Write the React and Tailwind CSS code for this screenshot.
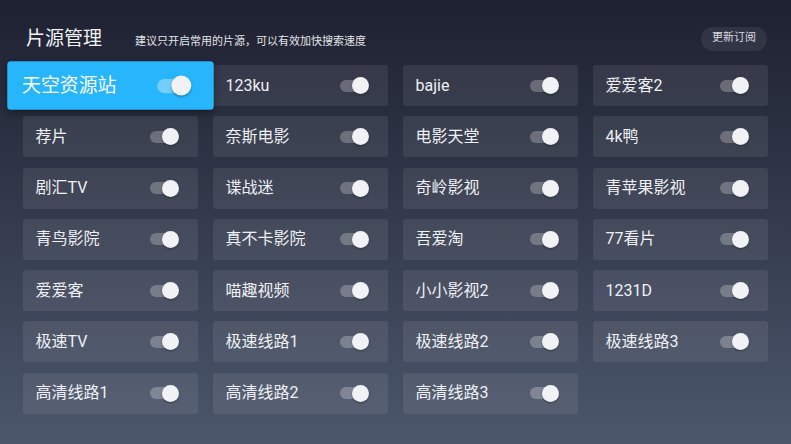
const SOURCES = [
  "天空资源站", "123ku", "bajie", "爱爱客2",
  "荐片", "奈斯电影", "电影天堂", "4k鸭",
  "剧汇TV", "谍战迷", "奇岭影视", "青苹果影视",
  "青鸟影院", "真不卡影院", "吾爱淘", "77看片",
  "爱爱客", "喵趣视频", "小小影视2", "1231D",
  "极速TV", "极速线路1", "极速线路2", "极速线路3",
  "高清线路1", "高清线路2", "高清线路3",
];

const Toggle = ({ active }) => (
  <div className="relative w-[29px] h-[17px] shrink-0">
    {/* track */}
    <div
      className={`absolute left-0 top-[2.5px] w-[24px] h-[12px] rounded-full ${
        active ? "bg-white/35" : "bg-white/25"
      }`}
    />
    {/* knob */}
    <div className="absolute right-0 top-0 w-[17px] h-[17px] rounded-full bg-[#f1f2f5] shadow-[0_1px_2px_rgba(0,0,0,0.35)]" />
  </div>
);

const SourceCard = ({ name, focused }) => (
  <div
    className={`flex items-center justify-between h-[41px] pl-[12.5px] pr-[19px] rounded-[3px] ${
      focused
        ? "relative z-10 scale-[1.18] bg-[#27b5fb] text-white shadow-[0_2px_6px_rgba(0,0,0,0.35)]"
        : "bg-white/[0.08] text-[#eef0f4]"
    }`}
  >
    <span className="text-[16px] leading-none">{name}</span>
    <Toggle active={focused} />
  </div>
);

export default function App() {
  return (
    <div
      className="w-full h-[444px] overflow-hidden bg-gradient-to-b from-[#1e2131] to-[#4c576c]"
      style={{ fontFamily: 'Roboto, "Noto Sans CJK SC", sans-serif' }}
    >
      {/* HEADER */}
      <div className="flex items-center justify-between pl-[26px] pr-[24px] pt-[26px] h-[51px]">
        <div className="flex items-end">
          <h1 className="text-[19px] leading-[24px] text-[#f2f3f6] font-normal">片源管理</h1>
          <span className="ml-[33px] mb-[1px] text-[11px] leading-[16px] text-[#e2e4e9]">
            建议只开启常用的片源，可以有效加快搜索速度
          </span>
        </div>
        <button className="w-[66px] h-[24px] rounded-full bg-white/[0.07] text-[11px] text-[#d6d9e0]">
          更新订阅
        </button>
      </div>

      {/* GRID */}
      <section className="mt-[14px] ml-[23px] grid grid-cols-[repeat(4,175px)] gap-x-[15px] gap-y-[10.3px]">
        {SOURCES.map((name, i) => (
          <SourceCard key={name} name={name} focused={i === 0} />
        ))}
      </section>
    </div>
  );
}
